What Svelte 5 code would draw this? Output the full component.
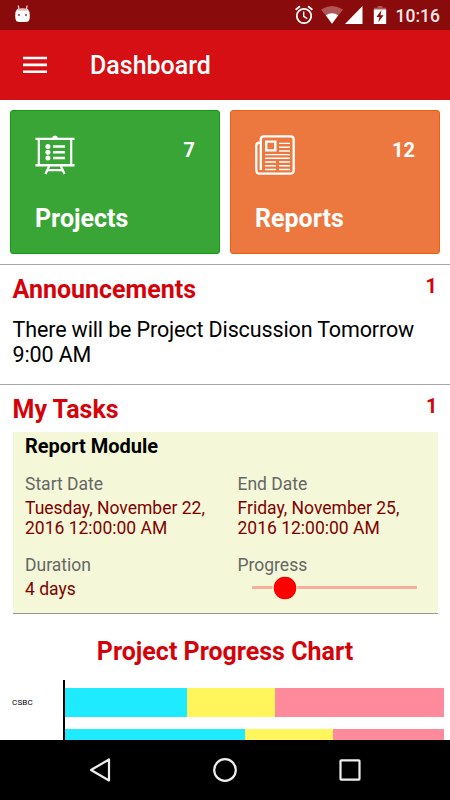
<script lang="ts">
	const tiles = [
		{ id: 'projects', title: 'Projects', count: 7 },
		{ id: 'reports', title: 'Reports', count: 12 }
	];

	const announcements = ['There will be Project Discussion Tomorrow 9:00 AM'];

	const tasks = [
		{
			name: 'Report Module',
			start: 'Tuesday, November 22, 2016 12:00:00 AM',
			end: 'Friday, November 25, 2016 12:00:00 AM',
			duration: '4 days',
			progress: 20
		}
	];

	// done / in progress / remaining
	const chart = [
		{ label: 'CSBC', parts: [122.5, 88.5, 169] },
		{ label: '', parts: [180.5, 88.5, 111] }
	];
</script>

<div class="screen">
	<header class="status">
		<svg class="cat" width="16" height="20" viewBox="0 0 16 20">
			<path d="M3.2 0.5 4 4M12.2 0.5 11.4 4" stroke="#e9c8c8" stroke-width="1.3" />
			<path
				d="M2.2 4Q7.5 2.8 12.8 4Q14.8 6 14.8 10.500Q14.800 15 13.200 16.500Q7.500 17.500 1.800 16.500Q0.200 15 0.200 10.500Q0.200 6 2.200 4Z"
				fill="#fff"
			/>
			<path d="M2.500 4.100Q7.500 3 12.500 4.100V5.800H2.500Z" fill="#e3bcbc" />
			<path d="M3 9H5V11H3ZM10 9H12V11H10Z" fill="#b66" />
		</svg>
		<div class="indicators">
			<svg width="18" height="20" viewBox="0 0 18 20" fill="none" stroke="#fff">
				<circle cx="9" cy="11" r="7.200" stroke-width="1.800" />
				<path d="M8.700 6.500V11.300L12.300 13.600" stroke-width="1.400" />
				<path d="M0.600 4.800 5 1.200M17.400 4.800 13 1.200" stroke-width="1.800" />
			</svg>
			<svg class="wifi" width="22" height="20" viewBox="0 0 22 20">
				<path d="M0 4.500Q11 -2.500 22 4.500L11 18.800Z" fill="#b05555" />
				<path d="M4.800 10.200Q11 6.300 17.200 10.200L11 18.800Z" fill="#fff" />
			</svg>
			<svg class="signal" width="18" height="20" viewBox="0 0 18 20">
				<path d="M17.500 1V19H0Z" fill="#fff" />
			</svg>
			<svg class="battery" width="14" height="20" viewBox="0 0 14 20">
				<path d="M4.500 1H9.500V2.700H13V5H1V2.700H4.500Z" fill="#b05555" />
				<path d="M0.800 4.500H13.200V19H0.800Z" fill="#fff" />
				<path d="M8.500 5 3.500 12H6.500L5.300 17.300 10.600 10.300H7.500Z" fill="#8a0b0b" />
			</svg>
			<span class="time">10:16</span>
		</div>
	</header>

	<div class="toolbar">
		<button class="menu" aria-label="Menu">
			<svg width="24" height="18" viewBox="0 0 24 18">
				<path d="M0 2H24M0 8.900H24M0 15.800H24" stroke="#fff" stroke-width="2.600" />
			</svg>
		</button>
		<h1>Dashboard</h1>
	</div>

	<main>
		<div class="tiles">
			{#each tiles as tile}
				<div class="tile {tile.id}">
					<div class="tile-top">
						{#if tile.id === 'projects'}
							<svg width="40" height="40" viewBox="0 0 40 40" fill="none" stroke="#fff">
								<path d="M0.500 3.900H39.500M0.500 30.300H39.500" stroke-width="2.400" />
								<path d="M17 3Q17.500 0.500 20 0.500Q22.500 0.500 23 3Z" fill="#fff" stroke="none" />
								<path d="M3.800 4V30M36.200 4V30" stroke-width="2.200" />
								<path d="M18 11.500H30M18 17.200H30M18 23H30" stroke-width="2.600" />
								<path d="M14.200 31 10.500 39M25.800 31 29.500 39M13 35.200H27" stroke-width="2.200" />
								<g fill="#fff" stroke="none">
									<circle cx="12.900" cy="11.500" r="2.500" />
									<circle cx="12.900" cy="17.200" r="2.500" />
									<circle cx="12.900" cy="23" r="2.500" />
								</g>
							</svg>
						{:else}
							<svg width="40" height="40" viewBox="0 0 40 40" fill="none" stroke="#fff">
								<path
									d="M5.800 35V4.500Q5.800 1.300 9 1.300H35.500Q38.700 1.300 38.700 4.500V35Q38.700 38.700 35 38.700H5Q1.300 38.700 1.300 35V10.500Q1.300 7.500 5.800 7.500"
									stroke-width="2.300"
								/>
								<path d="M11.200 6.600H20.300V15.400H11.200Z" stroke-width="2.400" />
								<path
									d="M24 8.400H35M24 12.200H35M24 16H35M10 19.600H35M10 23.200H35M10 27H21M24 27H35M10 30.800H21M24 30.800H35M10 34.500H21M24 34.500H35"
									stroke-width="1.400"
								/>
							</svg>
						{/if}
						<span class="tile-count">{tile.count}</span>
					</div>
					<div class="tile-title">{tile.title}</div>
				</div>
			{/each}
		</div>

		<section class="announcements">
			<div class="heading">
				<h2>Announcements</h2>
				<span class="count">{announcements.length}</span>
			</div>
			{#each announcements as text}
				<p>{text}</p>
			{/each}
		</section>

		<section class="tasks">
			<div class="heading">
				<h2>My Tasks</h2>
				<span class="count">{tasks.length}</span>
			</div>
			{#each tasks as task}
				<article class="task">
					<h3>{task.name}</h3>
					<div class="fields">
						<div class="field">
							<div class="label">Start Date</div>
							<div class="value">{task.start}</div>
						</div>
						<div class="field">
							<div class="label">End Date</div>
							<div class="value">{task.end}</div>
						</div>
						<div class="field">
							<div class="label">Duration</div>
							<div class="value">{task.duration}</div>
						</div>
						<div class="field">
							<div class="label">Progress</div>
							<div class="slider">
								<div class="knob" style="left: {task.progress}%"></div>
							</div>
						</div>
					</div>
				</article>
			{/each}
		</section>

		<section class="chart">
			<h2>Project Progress Chart</h2>
			<div class="plot">
				{#each chart as row}
					<div class="row">
						<span class="row-label">{row.label}</span>
						<div class="bar">
							{#each row.parts as part}
								<div class="part" style="flex-grow: {part}"></div>
							{/each}
						</div>
					</div>
				{/each}
			</div>
		</section>
	</main>

	<nav>
		<svg width="24" height="26" viewBox="0 0 24 26">
			<path d="M3 13 21 2.500V23.500Z" />
		</svg>
		<svg width="26" height="26" viewBox="0 0 26 26">
			<circle cx="13" cy="13" r="10.800" />
		</svg>
		<svg width="24" height="26" viewBox="0 0 24 26">
			<rect x="2.500" y="3.300" width="19" height="19.300" rx="0.800" />
		</svg>
	</nav>
</div>

<style>
	:global(body) {
		margin: 0;
	}

	.screen {
		width: 450px;
		height: 800px;
		display: flex;
		flex-direction: column;
		overflow: hidden;
		background: #fff;
		font-family: Roboto, sans-serif;
		color: #000;
	}

	h1,
	h2,
	h3,
	p {
		margin: 0;
	}

	svg {
		display: block;
		flex: none;
	}

	/* Top bars */
	.status {
		flex: none;
		display: flex;
		justify-content: space-between;
		height: 30px;
		padding: 5px 10px 0 15px;
		box-sizing: border-box;
		background: #8a0b0b;
	}

	.indicators {
		display: flex;
	}

	.wifi {
		margin-left: 8px;
	}

	.signal {
		margin-left: 2px;
	}

	.battery {
		margin-left: 10px;
	}

	.time {
		width: 45px;
		margin-left: 8px;
		font-size: 17.500px;
		font-weight: 500;
		line-height: 22px;
		color: #f6e6e6;
		text-align: right;
	}

	.toolbar {
		flex: none;
		display: flex;
		align-items: center;
		gap: 43px;
		height: 70px;
		padding-left: 23px;
		background: #d50f13;
	}

	.menu {
		padding: 0;
		border: 0;
		background: none;
	}

	h1 {
		padding-top: 2px;
		font-size: 25px;
		font-weight: 500;
		line-height: 30px;
		color: #fff;
	}

	main {
		flex: 1;
		min-height: 0;
		overflow: hidden;
	}

	/* Tiles */
	.tiles {
		display: grid;
		grid-template-columns: 1fr 1fr;
		gap: 10px;
		padding: 10px 10px 10.500px;
	}

	.tile {
		height: 143.500px;
		box-sizing: border-box;
		border: 1px solid;
		border-radius: 3px;
		padding: 24px;
		color: #fff;
	}

	.projects {
		background: #3aa537;
		border-color: #109d0e;
	}

	.reports {
		background: #ed783f;
		border-color: #eb5e0b;
	}

	.tile-top {
		display: flex;
		justify-content: space-between;
	}

	.tile-count {
		font-size: 20px;
		font-weight: 700;
		line-height: 30px;
	}

	.tile-title {
		margin-top: 29px;
		font-size: 25px;
		font-weight: 700;
		line-height: 30px;
	}

	/* Sections */
	section {
		border-top: 1px solid #a6a6a6;
	}

	.announcements {
		height: 120px;
		padding: 10px 13px 0 12.500px;
		box-sizing: border-box;
	}

	.tasks {
		padding: 10px 12.500px 0;
	}

	.heading {
		display: flex;
		justify-content: space-between;
		height: 37px;
	}

	h2 {
		font-size: 25px;
		font-weight: 700;
		line-height: 30px;
		color: #d50309;
	}

	.count {
		font-size: 20px;
		font-weight: 700;
		line-height: 23px;
		color: #d50309;
	}

	.announcements p {
		padding-top: 6px;
		font-size: 21.500px;
		line-height: 24.500px;
		letter-spacing: -0.130px;
	}

	.task {
		height: 181.500px;
		padding: 0 12.500px;
		box-sizing: border-box;
		border-bottom: 1px solid #999;
		background: #f4f8d8;
	}

	h3 {
		font-size: 20px;
		font-weight: 700;
		line-height: 28px;
	}

	.fields {
		display: grid;
		grid-template-columns: 187.500px 187.500px;
		column-gap: 25px;
		row-gap: 16px;
		padding-top: 14px;
		font-size: 17.500px;
		line-height: 20.300px;
	}

	.label {
		padding-bottom: 3.700px;
		color: #666;
	}

	.value {
		color: #800000;
	}

	.slider {
		position: relative;
		height: 3px;
		margin: 7.500px 8px 0 14px;
		background: #f9ae9a;
	}

	.knob {
		position: absolute;
		top: 50%;
		width: 23px;
		height: 23px;
		border: 1px solid #f4f8d8;
		border-radius: 50%;
		background: #f00;
		background-clip: padding-box;
		transform: translate(-50%, -50%);
	}

	/* Chart */
	.chart {
		border-top: 0;
		padding: 23px 6px 0 12px;
	}

	.chart h2 {
		padding-right: 6px;
		text-align: center;
	}

	.plot {
		margin-top: 13px;
		display: flex;
		flex-direction: column;
	}

	.row {
		display: flex;
		height: 41px;
	}

	.row-label {
		width: 50.500px;
		padding-top: 18px;
		font-size: 8px;
		line-height: 10px;
		letter-spacing: 0.200px;
	}

	.bar {
		flex: 1;
		display: flex;
		padding: 8px 0 4px;
		border-left: 2px solid #000;
	}

	.part {
		flex-basis: 0;
		background: #1eebff;
	}

	.part:nth-child(2) {
		background: #fff65c;
	}

	.part:nth-child(3) {
		background: #ff8a9c;
	}

	/* Android navigation */
	nav {
		flex: none;
		display: flex;
		align-items: center;
		justify-content: space-between;
		height: 60px;
		padding: 0 88px;
		background: #000;
	}

	nav svg {
		fill: none;
		stroke: #eee;
		stroke-width: 2.200;
		stroke-linejoin: round;
	}
</style>
